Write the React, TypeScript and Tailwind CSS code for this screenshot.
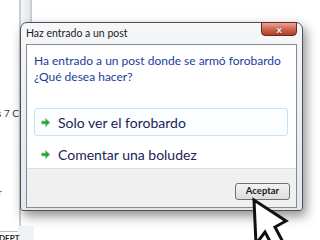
import React from "react";

function GreenArrow() {
  return (
    <svg width="11" height="11" viewBox="0 0 11 11" className="shrink-0">
      <polygon
        points="1.5,4 5.5,4 5.5,1.2 10,5.5 5.5,9.8 5.5,7 1.5,7"
        fill="#2e9e3a"
        stroke="#9ad39f"
        strokeWidth="0.8"
        strokeLinejoin="round"
      />
    </svg>
  );
}

function Cursor() {
  return (
    <svg
      width="52"
      height="52"
      viewBox="0 0 52 52"
      className="absolute left-[250px] top-[197px]"
    >
      <polygon
        points="4,3 6,47 15,35 25,54 35,49 25,30 36,24"
        fill="#ffffff"
        stroke="#111111"
        strokeWidth="3"
        strokeLinejoin="miter"
      />
    </svg>
  );
}

export default function App() {
  return (
    <div className="relative h-[240px] w-[320px] overflow-hidden bg-white font-['Lato',sans-serif]">
      {/* ventana de atrás */}
      <div className="absolute left-[19px] top-0 h-[30px] w-[13px] border-x-2 border-x-[#c9cdd1] bg-gradient-to-r from-[#f3f4f5] to-[#e6e8ea]" />
      <div className="absolute left-[19px] top-[30px] h-[200px] w-[2px] bg-[#c9cdd1]" />
      <span className="absolute left-[-3px] top-[108px] text-[10px] leading-none text-[#333]">
        s 7 C
      </span>
      <span className="absolute left-[-2px] top-[187px] text-[10px] leading-none text-[#2a66c4]">
        r
      </span>
      <div className="absolute left-[18px] top-[226px] h-[14px] w-[16px] bg-[#f1f2f3]" />
      <div className="absolute left-0 top-[231px] h-[1px] w-[18px] bg-[#bbb]" />
      <span className="absolute left-[-1px] top-[234px] text-[8px] font-bold leading-none text-[#222]">
        DEPT
      </span>

      {/* diálogo */}
      <div className="absolute left-[20px] top-[22px] flex h-[189px] w-[283px] flex-col rounded-t-[7px] rounded-b-[3px] border border-[#4d5257] bg-gradient-to-b from-[#f5f7f9] to-[#e3e7eb] px-[5px] pb-[4px] shadow-[3px_5px_12px_rgba(0,0,0,0.45)]">
        <div className="flex h-[21px] shrink-0 items-center">
          <span className="pt-[1px] text-[10.5px] text-[#1b1b1b]">
            Haz entrado a un post
          </span>
        </div>
        <div className="absolute left-[240px] top-[-1px] flex h-[14px] w-[36px] items-center justify-center rounded-b-[4px] border border-[#6b2a20] bg-gradient-to-b from-[#e7a595] via-[#d06650] to-[#b33c25]">
          <span className="text-[10px] font-bold leading-none text-white [text-shadow:0_0_1px_#333]">
            x
          </span>
        </div>

        <div className="flex flex-1 flex-col border border-[#828b95] bg-white">
          <div className="flex flex-1 flex-col px-[7px] pt-[8px]">
            <p className="whitespace-nowrap text-[12px] leading-[16px] text-[#1a3c9e]">
              Ha entrado a un post donde se armó forobardo
              <br />
              ¿Qué desea hacer?
            </p>
            <div className="mt-[23px] flex h-[28px] w-[254px] items-center gap-[7px] rounded-[3px] border border-[#c6e2f7] bg-[#fbfdff] pl-[5px]">
              <GreenArrow />
              <span className="text-[14px] text-[#1c2357]">
                Solo ver el forobardo
              </span>
            </div>
            <div className="mt-[4px] flex h-[28px] items-center gap-[7px] pl-[6px]">
              <GreenArrow />
              <span className="text-[14px] text-[#1c2357]">
                Comentar una boludez
              </span>
            </div>
          </div>
          <div className="flex h-[39px] shrink-0 items-start justify-end border-t border-[#dfdfdf] bg-[#f0f0f0] pr-[6px] pt-[14px]">
            <div className="flex h-[17px] w-[55px] items-center justify-center rounded-[3px] border border-[#707070] bg-gradient-to-b from-[#f4f4f4] to-[#dcdcdc]">
              <span className="text-[9.5px] font-bold text-[#1b1b1b]">
                Aceptar
              </span>
            </div>
          </div>
        </div>
      </div>

      <Cursor />
    </div>
  );
}
